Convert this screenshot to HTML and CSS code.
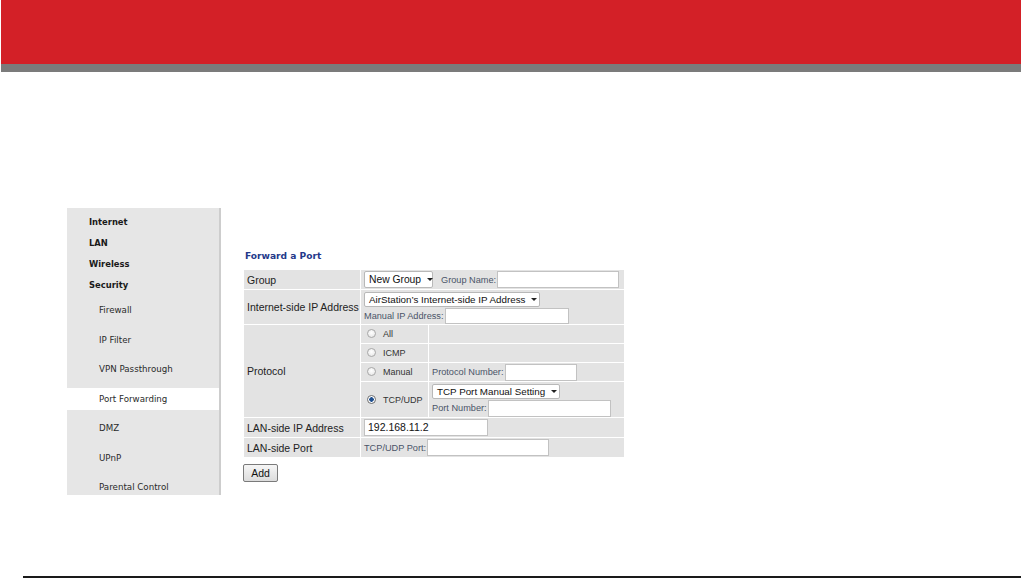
FILE: index.html
```html
<!DOCTYPE html>
<html lang="en">
<head>
  <meta charset="UTF-8" />
  <title>Forward a Port</title>
  <link rel="stylesheet" href="styles.css">
</head>
<body>
  <header class="topbar"></header>

  <div class="page">
    <nav class="sidebar">
      <div class="menu-main">Internet</div>
      <div class="menu-main">LAN</div>
      <div class="menu-main">Wireless</div>
      <div class="menu-main">Security</div>
      <div class="menu-sub first">Firewall</div>
      <div class="menu-sub">IP Filter</div>
      <div class="menu-sub">VPN Passthrough</div>
      <div class="menu-sub active">Port Forwarding</div>
      <div class="menu-sub">DMZ</div>
      <div class="menu-sub">UPnP</div>
      <div class="menu-sub">Parental Control</div>
    </nav>

    <main class="content">
      <h2 class="title">Forward a Port</h2>
      <table class="form">
        <tr class="r-group">
          <td class="label">Group</td>
          <td colspan="2">
            <div class="line">
              <span class="select w-group">New Group<span class="arrow"></span></span>
              <span class="hint gap-l">Group Name:</span>
              <span class="input w-gname"></span>
            </div>
          </td>
        </tr>
        <tr class="r-inet">
          <td class="label">Internet-side IP Address</td>
          <td colspan="2">
            <div class="line">
              <span class="select small w-air">AirStation’s Internet-side IP Address<span class="arrow"></span></span>
            </div>
            <div class="line">
              <span class="hint">Manual IP Address:</span>
              <span class="input w-mip"></span>
            </div>
          </td>
        </tr>
        <tr class="r-sub">
          <td class="label" rowspan="4">Protocol</td>
          <td class="radio-cell"><span class="radio"></span>All</td>
          <td></td>
        </tr>
        <tr class="r-sub">
          <td class="radio-cell"><span class="radio"></span>ICMP</td>
          <td></td>
        </tr>
        <tr class="r-sub">
          <td class="radio-cell"><span class="radio"></span>Manual</td>
          <td class="pad">
            <div class="line">
              <span class="hint">Protocol Number:</span>
              <span class="input w-pnum"></span>
            </div>
          </td>
        </tr>
        <tr class="r-tcp">
          <td class="radio-cell"><span class="radio on"></span>TCP/UDP</td>
          <td class="pad">
            <div class="line">
              <span class="select small w-tcp">TCP Port Manual Setting<span class="arrow"></span></span>
            </div>
            <div class="line">
              <span class="hint">Port Number:</span>
              <span class="input w-port"></span>
            </div>
          </td>
        </tr>
        <tr class="r-lan">
          <td class="label">LAN-side IP Address</td>
          <td colspan="2">
            <span class="input w-lanip">192.168.11.2</span>
          </td>
        </tr>
        <tr class="r-lan">
          <td class="label">LAN-side Port</td>
          <td colspan="2">
            <div class="line">
              <span class="hint">TCP/UDP Port:</span>
              <span class="input w-lport"></span>
            </div>
          </td>
        </tr>
      </table>
      <button class="btn">Add</button>
    </main>
  </div>

  <footer class="bottom-line"></footer>
</body>
</html>
```

FILE: styles.css
```css
body {
  margin: 0;
  background: #fff;
  font-family: "Liberation Sans", Arial, sans-serif;
  color: #222;
}

.topbar {
  height: 64px;
  margin-left: 1px;
  background: #d32027;
  border-bottom: 8px solid #7b7b7b;
}

.page {
  display: flex;
  align-items: flex-start;
  padding: 136px 0 0 67px;
}

/* left menu */
.sidebar {
  width: 154px;
  height: 287px;
  box-sizing: border-box;
  overflow: hidden;
  padding-top: 4px;
  background: #e6e6e6;
  border-right: 2px solid #cdcdcd;
  font-family: "DejaVu Sans", Verdana, sans-serif;
  color: #1a1a1a;
}

.menu-main {
  height: 21px;
  line-height: 21px;
  padding-left: 22px;
  font-size: 8.4px;
  font-weight: bold;
}

.menu-sub {
  height: 22px;
  line-height: 22px;
  padding-left: 32px;
  margin-bottom: 7.5px;
  font-size: 8.7px;
  color: #2a2a2a;
}

.menu-sub.first {
  margin-top: 3px;
}

.menu-sub.active {
  background: #fff;
  margin-right: -2px;
}

/* content */
.content {
  margin-left: 22px;
  padding-top: 41px;
}

.title {
  margin: 0 0 6px 2px;
  height: 14px;
  line-height: 14px;
  font-family: "DejaVu Sans", Verdana, sans-serif;
  font-size: 9.1px;
  font-weight: bold;
  color: #24398a;
}

.form {
  width: 382px;
  border-spacing: 1px;
  background: #fff;
  font-size: 10.5px;
}

.form td {
  background: #e3e3e3;
  padding: 0 0 0 3px;
  vertical-align: middle;
  white-space: nowrap;
}

.form td.label {
  width: 113px;
  padding-left: 3px;
  color: #222;
}

.form td.radio-cell {
  width: 61px;
  padding-left: 6px;
  font-size: 9px;
  color: #333;
}

.form td.pad {
  padding-left: 3px;
}

.r-group td { height: 19px; }
.r-inet td { height: 33px; }
.r-sub td { height: 18px; }
.r-tcp td { height: 35px; }
.r-lan td { height: 19px; }

.line {
  display: flex;
  align-items: center;
}

.hint {
  font-size: 9.2px;
  color: #4a5468;
}

.gap-l {
  margin-left: 8px;
}

.select {
  display: inline-flex;
  align-items: center;
  justify-content: space-between;
  box-sizing: border-box;
  height: 17px;
  padding: 0 5px 0 4px;
  background: #fff;
  border: 1px solid #b8b8b8;
  border-radius: 2px;
  font-size: 10.3px;
  color: #111;
  white-space: nowrap;
}

.select.small {
  height: 15px;
  font-size: 9.8px;
}

.arrow {
  flex: none;
  width: 0;
  height: 0;
  margin-left: 6px;
  border-left: 3px solid transparent;
  border-right: 3px solid transparent;
  border-top: 3px solid #222;
}

.input {
  display: inline-block;
  box-sizing: border-box;
  height: 17px;
  line-height: 15px;
  padding-left: 3px;
  background: #fff;
  border: 1px solid #c2c2c2;
  font-size: 10.5px;
  color: #111;
}

.w-group { width: 69px; }
.w-gname { width: 122px; margin-left: 1px; }
.w-air { width: 176px; margin: 2px 0 1px 0; }
.w-mip { width: 124px; margin-left: 1px; height: 16px; }
.w-pnum { width: 72px; margin-left: 1px; }
.w-tcp { width: 128px; margin: 1px 0 1px 0; }
.w-port { width: 123px; margin-left: 1px; }
.w-lanip { width: 124px; vertical-align: middle; }
.w-lport { width: 122px; margin-left: 1px; }

.radio {
  display: inline-block;
  width: 9px;
  height: 9px;
  box-sizing: border-box;
  margin-right: 7px;
  vertical-align: -1px;
  border: 1px solid #a8a8a8;
  border-radius: 50%;
  background: radial-gradient(circle at 50% 40%, #fff, #e2e2e2);
}

.radio.on {
  border-color: #6f6f6f;
  background: radial-gradient(circle, #1f4f8f 0 2px, #fff 2.5px);
}

.btn {
  display: block;
  margin-top: 6px;
  width: 35px;
  height: 18px;
  padding: 0;
  font-family: "Liberation Sans", Arial, sans-serif;
  font-size: 10.5px;
  color: #111;
  background: linear-gradient(#f6f6f6, #dcdcdc);
  border: 1px solid #7a7a7a;
  border-radius: 2px;
}

.bottom-line {
  margin: 81px 0 0 23px;
  height: 2px;
  background: #1a1a1a;
}
```
